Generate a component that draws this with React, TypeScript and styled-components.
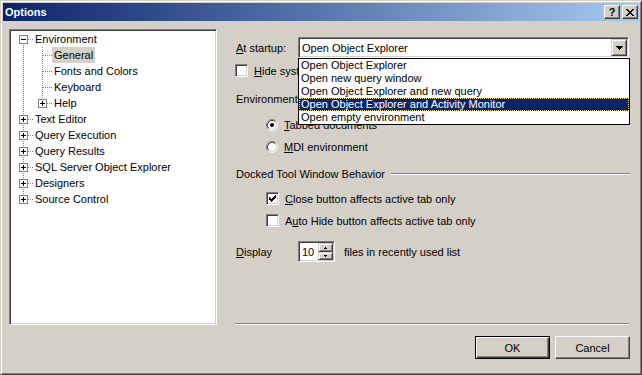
import React from 'react';
import styled, { createGlobalStyle, css } from 'styled-components';

const Global = createGlobalStyle`
  html, body { margin: 0; padding: 0; background: #d4d0c8; }
  body {
    font-family: "Liberation Sans", Arial, sans-serif;
    font-size: 11px;
    color: #000;
  }
  * { box-sizing: border-box; }
`;

const raisedButton = css`
  border: 1px solid;
  border-color: #fff #404040 #404040 #fff;
  box-shadow: inset -1px -1px #808080;
  background: #d4d0c8;
`;

const raisedControl = css`
  border: 1px solid;
  border-color: #d4d0c8 #404040 #404040 #d4d0c8;
  box-shadow: inset 1px 1px #fff, inset -1px -1px #808080;
  background: #d4d0c8;
`;

const sunken = css`
  border: 1px solid;
  border-color: #808080 #fff #fff #808080;
  box-shadow: inset 1px 1px #404040, inset -1px -1px #d4d0c8;
`;

const Window = styled.div`
  width: 642px;
  height: 375px;
  border: 1px solid;
  border-color: #d4d0c8 #404040 #404040 #d4d0c8;
  box-shadow: inset 1px 1px #fff, inset -1px -1px #808080;
  padding: 2px;
  display: flex;
  flex-direction: column;
  background: #d4d0c8;
`;

const TitleBar = styled.div`
  height: 18px;
  flex: none;
  display: flex;
  align-items: center;
  padding: 0 1px 0 2px;
  background: linear-gradient(to right, #0a246a, #a6caf0);
  color: #fff;
  font-weight: bold;
  font-size: 11px;
`;

const TitleText = styled.div`
  flex: 1;
  line-height: 18px;
`;

const CaptionButton = styled.div`
  ${raisedButton};
  width: 16px;
  height: 14px;
  display: flex;
  align-items: center;
  justify-content: center;
  color: #000;
  font-weight: bold;
  font-size: 11px;
  line-height: 12px;
  & + & { margin-left: 2px; }
  svg { shape-rendering: crispEdges; }
`;

const Body = styled.div`
  flex: 1;
  display: flex;
  align-items: flex-start;
  gap: 18px;
  padding: 8px 9px 0 6px;
`;

const Tree = styled.div`
  ${sunken};
  width: 208px;
  height: 296px;
  flex: none;
  background: #fff;
  padding: 1px 0 0 4px;
`;

const TreeRow = styled.div`
  display: flex;
  align-items: center;
  height: 16px;
  white-space: nowrap;
`;

const ConnSvg = styled.svg`
  flex: none;
  display: block;
  shape-rendering: crispEdges;
  line { stroke: #808080; stroke-width: 1; stroke-dasharray: 1 1; }
`;

const TreeLabel = styled.span<{ $selected?: boolean }>`
  height: 16px;
  line-height: 16px;
  padding: 0 2px;
  background: ${p => (p.$selected ? '#d4d0c8' : 'transparent')};
`;

const RightCol = styled.div`
  width: 395px;
  flex: none;
  display: flex;
  flex-direction: column;
`;

const Settings = styled.div`
  height: 294px;
  padding-top: 8px;
  display: flex;
  flex-direction: column;
`;

const Row = styled.div<{ $mt?: number; $indent?: number; $h?: number }>`
  display: flex;
  align-items: center;
  height: ${p => p.$h ?? 13}px;
  margin-top: ${p => p.$mt ?? 0}px;
  padding-left: ${p => p.$indent ?? 0}px;
  white-space: nowrap;
`;

const FieldLabel = styled.span`
  width: 63px;
  flex: none;
  padding-left: 1px;
`;

const ComboWrap = styled.div`
  ${sunken};
  position: relative;
  z-index: 5;
  width: 331px;
  height: 21px;
  padding: 1px;
  background: #fff;
  display: flex;
  align-items: stretch;
`;

const ComboText = styled.div`
  flex: 1;
  padding-left: 2px;
  display: flex;
  align-items: center;
`;

const DropButton = styled.div`
  ${raisedControl};
  width: 16px;
  flex: none;
  display: flex;
  align-items: center;
  justify-content: center;
  svg { shape-rendering: crispEdges; }
`;

const DropList = styled.div`
  position: absolute;
  top: calc(100% + 1px);
  left: -1px;
  width: 332px;
  border: 1px solid #000;
  background: #fff;
`;

const DropItem = styled.div<{ $active?: boolean }>`
  height: 13px;
  line-height: 11px;
  padding-left: 1px;
  border: 1px ${p => (p.$active ? 'dotted #f5db95' : 'solid transparent')};
  background: ${p => (p.$active ? '#0a246a' : '#fff')};
  color: ${p => (p.$active ? '#fff' : '#000')};
`;

const CheckBox = styled.span`
  ${sunken};
  width: 13px;
  height: 13px;
  flex: none;
  background: #fff;
  display: flex;
  align-items: center;
  justify-content: center;
  svg { shape-rendering: crispEdges; }
`;

const RadioSvg = styled.svg`
  flex: none;
  display: block;
`;

const OptionText = styled.span`
  margin-left: 6px;
`;

const HeadingText = styled.span`
  padding-left: 1px;
`;

const EtchedLine = styled.div`
  flex: 1;
  height: 2px;
  margin-left: 6px;
  border-top: 1px solid #808080;
  border-bottom: 1px solid #fff;
`;

const SpinBox = styled.div`
  ${sunken};
  width: 37px;
  height: 21px;
  flex: none;
  padding: 1px;
  background: #fff;
  display: flex;
`;

const SpinText = styled.div`
  flex: 1;
  padding-left: 2px;
  display: flex;
  align-items: center;
`;

const SpinButtons = styled.div`
  width: 15px;
  flex: none;
  display: flex;
  flex-direction: column;
`;

const SpinBtn = styled.div<{ $h: number }>`
  ${raisedControl};
  height: ${p => p.$h}px;
  display: flex;
  align-items: center;
  justify-content: center;
  svg { shape-rendering: crispEdges; }
`;

const TrailingText = styled.span`
  margin-left: 9px;
`;

const Separator = styled.div`
  height: 2px;
  margin-right: 1px;
  border-top: 1px solid #808080;
  border-bottom: 1px solid #fff;
`;

const Footer = styled.div`
  display: flex;
  justify-content: flex-end;
  gap: 5px;
  margin-top: 11px;
`;

const PushButton = styled.div<{ $default?: boolean }>`
  width: 75px;
  height: 23px;
  display: flex;
  align-items: center;
  justify-content: center;
  ${p =>
    p.$default
      ? css`
          border: 1px solid #000;
          box-shadow: inset 1px 1px #fff, inset -1px -1px #404040, inset -2px -2px #808080;
          background: #d4d0c8;
        `
      : raisedButton};
`;

type Seg = { v?: 'full' | 'top' | 'bottom'; h?: boolean; box?: 'plus' | 'minus' };

const Connector = ({ v, h, box }: Seg) => (
  <ConnSvg width={19} height={16} viewBox="0 0 19 16">
    {v === 'full' && <line x1={9.5} y1={0} x2={9.5} y2={16} />}
    {v === 'top' && <line x1={9.5} y1={0} x2={9.5} y2={8} />}
    {v === 'bottom' && <line x1={9.5} y1={8} x2={9.5} y2={16} />}
    {h && <line x1={10} y1={8.5} x2={19} y2={8.5} />}
    {box && (
      <>
        <rect x={5.5} y={4.5} width={8} height={8} fill="#fff" stroke="#808080" />
        <path d="M7 8h5v1H7z" fill="#000" />
        {box === 'plus' && <path d="M9 6h1v5H9z" fill="#000" />}
      </>
    )}
  </ConnSvg>
);

const treeItems: { label: string; selected?: boolean; segs: Seg[] }[] = [
  { label: 'Environment', segs: [{ v: 'bottom', h: true, box: 'minus' }] },
  { label: 'General', selected: true, segs: [{ v: 'full' }, { v: 'full', h: true }] },
  { label: 'Fonts and Colors', segs: [{ v: 'full' }, { v: 'full', h: true }] },
  { label: 'Keyboard', segs: [{ v: 'full' }, { v: 'full', h: true }] },
  { label: 'Help', segs: [{ v: 'full' }, { v: 'top', h: true, box: 'plus' }] },
  { label: 'Text Editor', segs: [{ v: 'full', h: true, box: 'plus' }] },
  { label: 'Query Execution', segs: [{ v: 'full', h: true, box: 'plus' }] },
  { label: 'Query Results', segs: [{ v: 'full', h: true, box: 'plus' }] },
  { label: 'SQL Server Object Explorer', segs: [{ v: 'full', h: true, box: 'plus' }] },
  { label: 'Designers', segs: [{ v: 'full', h: true, box: 'plus' }] },
  { label: 'Source Control', segs: [{ v: 'top', h: true, box: 'plus' }] },
];

const dropItems = [
  'Open Object Explorer',
  'Open new query window',
  'Open Object Explorer and new query',
  'Open Object Explorer and Activity Monitor',
  'Open empty environment',
];

const CheckMark = () => (
  <svg width={7} height={7} viewBox="0 0 7 7">
    <path
      d="M0 2h1v3H0z M1 3h1v3H1z M2 4h1v3H2z M3 3h1v3H3z M4 2h1v3H4z M5 1h1v3H5z M6 0h1v3H6z"
      fill="#000"
    />
  </svg>
);

const Radio = ({ checked }: { checked?: boolean }) => (
  <RadioSvg width={12} height={12} viewBox="0 0 12 12">
    <circle cx={6} cy={6} r={5} fill="#fff" />
    <path d="M2.11 9.89 A5.5 5.5 0 0 1 9.89 2.11" fill="none" stroke="#808080" />
    <path d="M9.89 2.11 A5.5 5.5 0 0 1 2.11 9.89" fill="none" stroke="#fff" />
    <path d="M2.82 9.18 A4.5 4.5 0 0 1 9.18 2.82" fill="none" stroke="#404040" />
    <path d="M9.18 2.82 A4.5 4.5 0 0 1 2.82 9.18" fill="none" stroke="#d4d0c8" />
    {checked && <circle cx={6} cy={6} r={2} fill="#000" />}
  </RadioSvg>
);

export default function App() {
  return (
    <>
      <Global />
      <Window>
        <TitleBar>
          <TitleText>Options</TitleText>
          <CaptionButton>?</CaptionButton>
          <CaptionButton>
            <svg width={8} height={7} viewBox="0 0 8 7">
              <path
                d="M0 0h2v1H0z M6 0h2v1H6z M1 1h2v1H1z M5 1h2v1H5z M2 2h4v1H2z M3 3h2v1H3z M2 4h4v1H2z M1 5h2v1H1z M5 5h2v1H5z M0 6h2v1H0z M6 6h2v1H6z"
                fill="#000"
              />
            </svg>
          </CaptionButton>
        </TitleBar>
        <Body>
          <Tree>
            {treeItems.map(item => (
              <TreeRow key={item.label}>
                {item.segs.map((s, i) => (
                  <Connector key={i} {...s} />
                ))}
                <TreeLabel $selected={item.selected}>{item.label}</TreeLabel>
              </TreeRow>
            ))}
          </Tree>
          <RightCol>
            <Settings>
              <Row $h={21}>
                <FieldLabel>
                  <u>A</u>t startup:
                </FieldLabel>
                <ComboWrap>
                  <ComboText>Open Object Explorer</ComboText>
                  <DropButton>
                    <svg width={7} height={4} viewBox="0 0 7 4">
                      <path d="M0 0h7v1H0z M1 1h5v1H1z M2 2h3v1H2z M3 3h1v1H3z" fill="#000" />
                    </svg>
                  </DropButton>
                  <DropList>
                    {dropItems.map((d, i) => (
                      <DropItem key={d} $active={i === 3}>
                        {d}
                      </DropItem>
                    ))}
                  </DropList>
                </ComboWrap>
              </Row>
              <Row $mt={6}>
                <CheckBox />
                <OptionText>
                  <u>H</u>ide system objects in Object Explorer
                </OptionText>
              </Row>
              <Row $mt={15}>
                <HeadingText>Environment layout</HeadingText>
                <EtchedLine />
              </Row>
              <Row $mt={13} $indent={31}>
                <Radio checked />
                <OptionText>
                  <u>T</u>abbed documents
                </OptionText>
              </Row>
              <Row $mt={9} $indent={31}>
                <Radio />
                <OptionText>
                  <u>M</u>DI environment
                </OptionText>
              </Row>
              <Row $mt={14}>
                <HeadingText>Docked Tool Window Behavior</HeadingText>
                <EtchedLine />
              </Row>
              <Row $mt={12} $indent={31}>
                <CheckBox>
                  <CheckMark />
                </CheckBox>
                <OptionText>
                  <u>C</u>lose button affects active tab only
                </OptionText>
              </Row>
              <Row $mt={9} $indent={31}>
                <CheckBox />
                <OptionText>
                  A<u>u</u>to Hide button affects active tab only
                </OptionText>
              </Row>
              <Row $mt={14} $h={21}>
                <FieldLabel>
                  <u>D</u>isplay
                </FieldLabel>
                <SpinBox>
                  <SpinText>10</SpinText>
                  <SpinButtons>
                    <SpinBtn $h={9}>
                      <svg width={3} height={2} viewBox="0 0 3 2">
                        <path d="M1 0h1v1H1z M0 1h3v1H0z" fill="#000" />
                      </svg>
                    </SpinBtn>
                    <SpinBtn $h={8}>
                      <svg width={3} height={2} viewBox="0 0 3 2">
                        <path d="M0 0h3v1H0z M1 1h1v1H1z" fill="#000" />
                      </svg>
                    </SpinBtn>
                  </SpinButtons>
                </SpinBox>
                <TrailingText>files in recently used list</TrailingText>
              </Row>
            </Settings>
            <Separator />
            <Footer>
              <PushButton $default>OK</PushButton>
              <PushButton>Cancel</PushButton>
            </Footer>
          </RightCol>
        </Body>
      </Window>
    </>
  );
}
